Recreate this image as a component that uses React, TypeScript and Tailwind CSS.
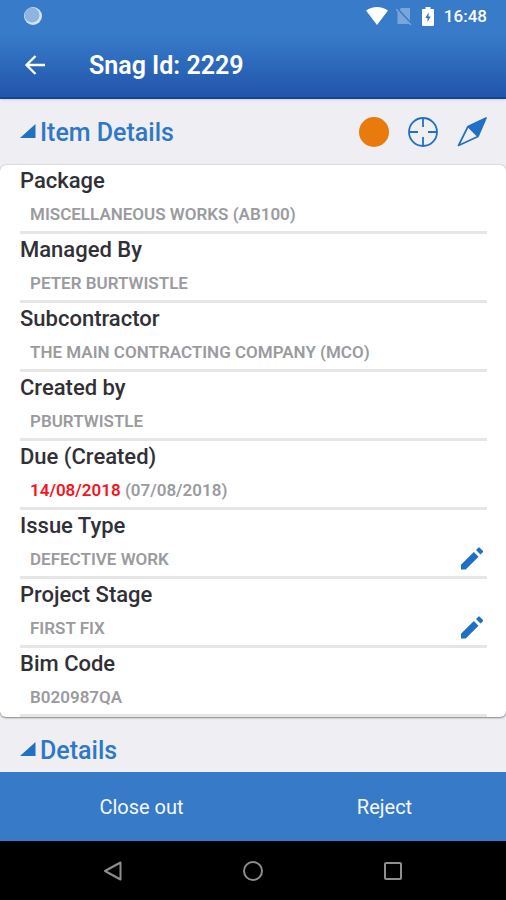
import { useState } from "react";

interface Field {
  label: string;
  value: string;
  overdue?: string;
  editable?: boolean;
}

const fields: Field[] = [
  { label: "Package", value: "MISCELLANEOUS WORKS (AB100)" },
  { label: "Managed By", value: "PETER BURTWISTLE" },
  { label: "Subcontractor", value: "THE MAIN CONTRACTING COMPANY (MCO)" },
  { label: "Created by", value: "PBURTWISTLE" },
  { label: "Due (Created)", value: "(07/08/2018)", overdue: "14/08/2018" },
  { label: "Issue Type", value: "DEFECTIVE WORK", editable: true },
  { label: "Project Stage", value: "FIRST FIX", editable: true },
  { label: "Bim Code", value: "B020987QA" },
];

function StatusBar() {
  return (
    <div className="flex h-8 items-center justify-between pl-6 pr-[19px] text-white">
      <svg width="18" height="18" viewBox="0 0 18 18" aria-hidden="true">
        <circle cx="9" cy="9" r="9" fill="#d3e3f5" />
        <circle cx="8" cy="8" r="7.5" fill="#8fb4e0" />
      </svg>
      <div className="flex items-center">
        <svg width="22" height="18" viewBox="0 0 22 18" className="mr-2" aria-hidden="true">
          <path d="M0 3.6C6.3-1.1 15.7-1.1 22 3.6L11 18Z" fill="#fff" />
        </svg>
        {/* No SIM */}
        <svg width="16" height="18" viewBox="0 0 16 18" className="mr-2.5" aria-hidden="true">
          <path d="M5 1H14V14L3.500 3ZM1.500 3.500L13.500 17H1.500Z" fill="#79a5db" />
          <path d="M.5 1L15.500 17.500" stroke="#3878c7" strokeWidth="2" />
          <path d="M0 2L15 18" stroke="#79a5db" strokeWidth="1.500" />
        </svg>
        <svg width="12" height="19" viewBox="0 0 12 19" className="mr-2.5" aria-hidden="true">
          <path
            d="M3.500 0h5v2H11a1 1 0 0 1 1 1v15a1 1 0 0 1-1 1H1a1 1 0 0 1-1-1V3a1 1 0 0 1 1-1h2.500Z"
            fill="#fff"
          />
          <path d="M6.600 5.500L3.300 11H5.500V15L8.700 9.500H6.600Z" fill="#3677c6" />
        </svg>
        <span className="text-[17px] leading-6 font-medium">16:48</span>
      </div>
    </div>
  );
}

function Crosshair() {
  return (
    <svg width="30" height="30" viewBox="0 0 30 30" fill="none" stroke="#2370c2" strokeWidth="1.800" aria-hidden="true">
      <circle cx="15" cy="15" r="14" />
      <path d="M15 1V10M15 20V29M1 15H10M20 15H29" />
    </svg>
  );
}

function Compass() {
  return (
    <svg width="30" height="30" viewBox="0 0 30 30" aria-hidden="true">
      <path d="M29.500.5L11 9.500L21 19.500Z" fill="#2370c2" />
      <path
        d="M29 1L11 9.500L1.500 28.500L21 19.500ZM11 9.500L21 19.500"
        fill="none"
        stroke="#2370c2"
        strokeWidth="1.700"
        strokeLinejoin="round"
      />
    </svg>
  );
}

function Pencil() {
  return (
    <svg width="24" height="24" viewBox="0 0 24 24" aria-hidden="true">
      <path
        d="M1 18.800L13.800 6L18.500 10.700L5.700 23.500H1ZM16 4L18.300 1.700Q19 1 19.700 1.700L22.800 4.800Q23.500 5.500 22.800 6.200L20.500 8.500Z"
        fill="#1f6fc4"
      />
    </svg>
  );
}

interface SectionHeaderProps {
  title: string;
  open: boolean;
  onToggle: () => void;
  children?: React.ReactNode;
}

function SectionHeader({ title, open, onToggle, children }: SectionHeaderProps) {
  return (
    <div className="flex h-[66px] items-center justify-between pr-[19px] pl-5">
      <h2 className="pt-0.5 text-[25px] leading-8 font-medium text-[#2f78c6]">
        <button type="button" aria-expanded={open} onClick={onToggle} className="flex cursor-pointer items-center gap-1">
          <svg width="16" height="18" viewBox="0 0 16 18" className={open ? "" : "rotate-90"} aria-hidden="true">
            <path d="M15.500 0V14H0Z" fill="#2370c2" />
          </svg>
          {title}
        </button>
      </h2>
      {children}
    </div>
  );
}

export default function App() {
  const [itemOpen, setItemOpen] = useState(true);
  const [detailsOpen, setDetailsOpen] = useState(true);

  return (
    <div className="flex h-screen flex-col bg-[#eeeef3] font-['Roboto',sans-serif]">
      <header className="z-10 border-b-2 border-[#134394] bg-linear-to-b from-[#387bc9] from-35% to-[#2255ab] shadow-sm">
        <StatusBar />
        <div className="flex h-[65px] items-center pl-[23px]">
          <button type="button" aria-label="Back" className="cursor-pointer">
            <svg width="24" height="24" viewBox="0 0 24 24" fill="none" stroke="#fff" strokeWidth="2.300" aria-hidden="true">
              <path d="M22 12H4M12.500 3L3.500 12L12.500 21" />
            </svg>
          </button>
          <h1 className="pt-0.5 pl-[42px] text-[25px] leading-8 font-semibold text-white">Snag Id: 2229</h1>
        </div>
      </header>

      <main className="min-h-0 flex-1 overflow-y-auto [scrollbar-width:none]">
        <SectionHeader title="Item Details" open={itemOpen} onToggle={() => setItemOpen(!itemOpen)}>
          <div className="flex items-center gap-[19px]">
            <span role="img" aria-label="Status" className="size-[30px] rounded-full bg-[#e87b0c]" />
            <button type="button" aria-label="Show location" className="cursor-pointer">
              <Crosshair />
            </button>
            <button type="button" aria-label="Show direction" className="cursor-pointer">
              <Compass />
            </button>
          </div>
        </SectionHeader>

        {itemOpen && (
          <dl className="rounded-md bg-white pr-[19px] pl-5 shadow-[0_1px_2px_rgba(0,0,0,0.4),0_0_2px_rgba(0,0,0,0.2)]">
            {fields.map((field) => (
              <div key={field.label} className="flex h-[69px] items-end justify-between border-b-3 border-[#e6e6e6]">
                <div className="self-start">
                  <dt className="pt-0.5 text-[22px] leading-7 font-medium text-[#303036]">{field.label}</dt>
                  <dd className="pt-[7px] pl-2.5 text-[17px] leading-6 font-semibold text-[#9b9b9f]">
                    {field.overdue && <span className="text-[#f5141c]">{field.overdue} </span>}
                    {field.value}
                  </dd>
                </div>
                {field.editable && (
                  <button type="button" aria-label={`Edit ${field.label}`} className="cursor-pointer pr-[3px] pb-1.5">
                    <Pencil />
                  </button>
                )}
              </div>
            ))}
          </dl>
        )}

        <SectionHeader title="Details" open={detailsOpen} onToggle={() => setDetailsOpen(!detailsOpen)} />
      </main>

      <div className="flex h-[69px] bg-[#377ac8] pl-5 text-xl text-[#f4f8fd]">
        <button type="button" className="flex-1 cursor-pointer">
          Close out
        </button>
        <button type="button" className="flex-1 cursor-pointer">
          Reject
        </button>
      </div>

      <nav className="flex h-[59px] bg-black px-[43px]">
        <button type="button" aria-label="Back" className="flex flex-1 items-center justify-center">
          <svg width="20" height="20" viewBox="0 0 20 20" fill="none" stroke="#8e8e8e" strokeWidth="2" strokeLinejoin="round">
            <path d="M17.500 1.500V18.500L2 10Z" />
          </svg>
        </button>
        <button type="button" aria-label="Home" className="flex flex-1 items-center justify-center">
          <svg width="20" height="20" viewBox="0 0 20 20" fill="none" stroke="#8e8e8e" strokeWidth="2">
            <circle cx="10" cy="10" r="9" />
          </svg>
        </button>
        <button type="button" aria-label="Recent apps" className="flex flex-1 items-center justify-center">
          <svg width="20" height="20" viewBox="0 0 20 20" fill="none" stroke="#8e8e8e" strokeWidth="2">
            <rect x="2" y="2" width="16" height="16" rx="1" />
          </svg>
        </button>
      </nav>
    </div>
  );
}
